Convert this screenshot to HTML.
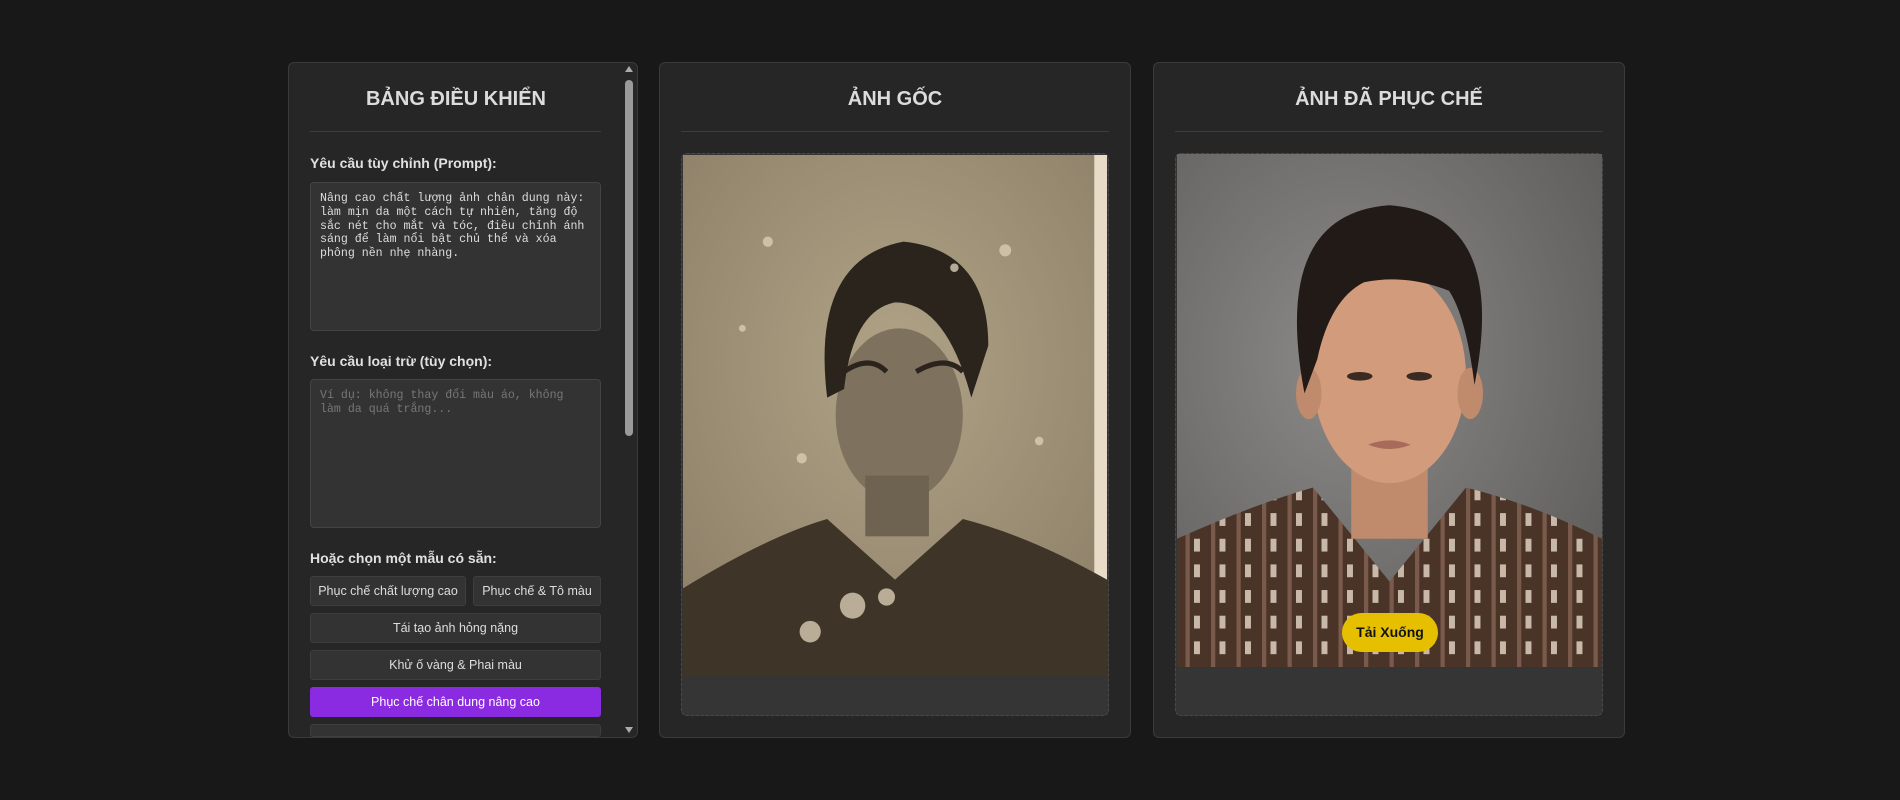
<!DOCTYPE html>
<html><head><meta charset="utf-8">
<style>
*{box-sizing:border-box;margin:0;padding:0}
body{width:1900px;height:800px;background:#181818;font-family:"Liberation Sans",sans-serif;position:relative;overflow:hidden;color:#e6e6e6}
.panel{position:absolute;top:62px;height:676px;background:#262626;border:1px solid #3a3a3a;border-radius:6px;overflow:hidden}
.title{position:absolute;left:0;right:0;top:88px;text-align:center;font-weight:bold;font-size:20px;color:#dcdcdc}
.hr{position:absolute;height:1px;background:#3d3d3d;top:131px}
.lbl{position:absolute;left:310px;font-weight:bold;font-size:14px;color:#e0e0e0}
.ta{position:absolute;left:310px;width:291px;background:#333;border:1px solid #444;border-radius:4px;font-family:"Liberation Mono",monospace;font-size:11.6px;line-height:13.8px;padding:9px 9px;color:#ddd}
.btn{position:absolute;height:30px;background:#333;border:1px solid #3e3e3e;border-radius:3px;font-size:12.5px;color:#ddd;text-align:center;line-height:28px}
.box{position:absolute;background:#353535;border:1px dashed #4a4a4a;border-radius:6px;overflow:hidden}
</style></head><body>
<div class="panel" style="left:288px;width:350px"></div>
<div class="panel" style="left:659px;width:472px"></div>
<div class="panel" style="left:1153px;width:472px"></div>

<div class="title" style="left:288px;width:336px;right:auto">BẢNG ĐIỀU KHIỂN</div>
<div class="hr" style="left:310px;width:291px"></div>
<div class="title" style="left:659px;width:472px;right:auto">ẢNH GỐC</div>
<div class="hr" style="left:681px;width:428px"></div>
<div class="title" style="left:1153px;width:472px;right:auto">ẢNH ĐÃ PHỤC CHẾ</div>
<div class="hr" style="left:1175px;width:428px"></div>

<div style="position:absolute;left:625px;top:66px;width:0;height:0;border-left:4px solid transparent;border-right:4px solid transparent;border-bottom:6px solid #aaa"></div>
<div style="position:absolute;left:625px;top:80px;width:8px;height:356px;background:#9a9a9a;border-radius:4px"></div>
<div style="position:absolute;left:625px;top:727px;width:0;height:0;border-left:4px solid transparent;border-right:4px solid transparent;border-top:6px solid #aaa"></div>

<div class="lbl" style="top:155px">Yêu cầu tùy chỉnh (Prompt):</div>
<div class="ta" style="top:182px;height:149px">Nâng cao chất lượng ảnh chân dung này: làm mịn da một cách tự nhiên, tăng độ sắc nét cho mắt và tóc, điều chỉnh ánh sáng để làm nổi bật chủ thể và xóa phông nền nhẹ nhàng.</div>
<div class="lbl" style="top:353px">Yêu cầu loại trừ (tùy chọn):</div>
<div class="ta" style="top:379px;height:149px;color:#777">Ví dụ: không thay đổi màu áo, không làm da quá trắng...</div>
<div class="lbl" style="top:550px">Hoặc chọn một mẫu có sẵn:</div>
<div class="btn" style="left:310px;top:576px;width:156px">Phục chế chất lượng cao</div>
<div class="btn" style="left:473px;top:576px;width:128px">Phục chế &amp; Tô màu</div>
<div class="btn" style="left:310px;top:613px;width:291px">Tái tạo ảnh hỏng nặng</div>
<div class="btn" style="left:310px;top:650px;width:291px">Khử ố vàng &amp; Phai màu</div>
<div class="btn" style="left:310px;top:687px;width:291px;background:#8a2be2;border-color:#8a2be2;color:#fff">Phục chế chân dung nâng cao</div>
<div class="btn" style="left:310px;top:724px;width:291px;height:13px"></div>

<div class="box" style="left:681px;top:153px;width:428px;height:563px"></div>
<svg style="position:absolute;left:683px;top:155px" width="424" height="520" viewBox="0 0 100 120" preserveAspectRatio="none">
<defs><radialGradient id="bg1" cx="50%" cy="40%" r="70%"><stop offset="0" stop-color="#b0a286"/><stop offset="1" stop-color="#8e8068"/></radialGradient></defs>
<rect width="100" height="120" fill="url(#bg1)"/>
<rect x="97" width="3" height="120" fill="#e8dcc8"/>
<path d="M0 100 Q20 88 34 84 L50 98 L66 84 Q82 88 100 98 V120 H0Z" fill="#3e3528"/>
<ellipse cx="51" cy="60" rx="15" ry="20" fill="#7e725e"/>
<rect x="43" y="74" width="15" height="14" fill="#6e6250"/>
<path d="M34 56 Q30 24 52 20 Q72 22 72 44 L68 56 Q62 34 50 34 Q40 36 38 54Z" fill="#2a241c"/>
<path d="M38 50 Q44 46 48 50 M55 50 Q62 46 66 50" stroke="#2a241c" stroke-width="1.2" fill="none"/>
<g fill="#d8ccb4" opacity=".8"><circle cx="20" cy="20" r="1.2"/><circle cx="76" cy="22" r="1.4"/><circle cx="64" cy="26" r="1"/><circle cx="28" cy="70" r="1.2"/><circle cx="40" cy="104" r="3"/><circle cx="30" cy="110" r="2.5"/><circle cx="84" cy="66" r="1"/><circle cx="14" cy="40" r=".8"/><circle cx="48" cy="102" r="2"/></g>
</svg>

<div class="box" style="left:1175px;top:153px;width:428px;height:563px"></div>
<svg style="position:absolute;left:1177px;top:154px" width="425" height="513" viewBox="0 0 100 120" preserveAspectRatio="none">
<defs><radialGradient id="bg2" cx="40%" cy="40%" r="75%"><stop offset="0" stop-color="#8c8a88"/><stop offset="1" stop-color="#5e5c5a"/></radialGradient>
<pattern id="st" width="6" height="6" patternUnits="userSpaceOnUse"><rect width="6" height="6" fill="#4a3428"/><rect x="2" width="1" height="6" fill="#7a5a4a"/><rect x="4" width="1.4" height="3" fill="#c8b8a8"/></pattern></defs>
<rect width="100" height="120" fill="url(#bg2)"/>
<path d="M0 90 Q18 82 32 78 L50 100 L68 78 Q84 82 100 90 V120 H0Z" fill="url(#st)"/>
<rect x="41" y="70" width="18" height="20" fill="#c08a6c"/>
<ellipse cx="50" cy="52" rx="18" ry="25" fill="#d29c7c"/>
<ellipse cx="31" cy="56" rx="3" ry="6" fill="#c08a6c"/><ellipse cx="69" cy="56" rx="3" ry="6" fill="#c08a6c"/>
<path d="M30 56 Q22 14 50 12 Q78 14 70 54 Q68 38 64 32 Q54 28 44 30 Q36 34 33 48Z" fill="#221a16"/>
<ellipse cx="43" cy="52" rx="3" ry="1" fill="#3a2a22"/><ellipse cx="57" cy="52" rx="3" ry="1" fill="#3a2a22"/>
<path d="M45 68 Q50 66 55 68 Q50 70 45 68Z" fill="#a86a5a"/>
</svg>
<div style="position:absolute;left:1342px;top:613px;width:96px;height:39px;border-radius:20px;background:#e6c000;color:#111;font-weight:bold;font-size:14px;text-align:center;line-height:39px">Tải Xuống</div>
</body></html>
